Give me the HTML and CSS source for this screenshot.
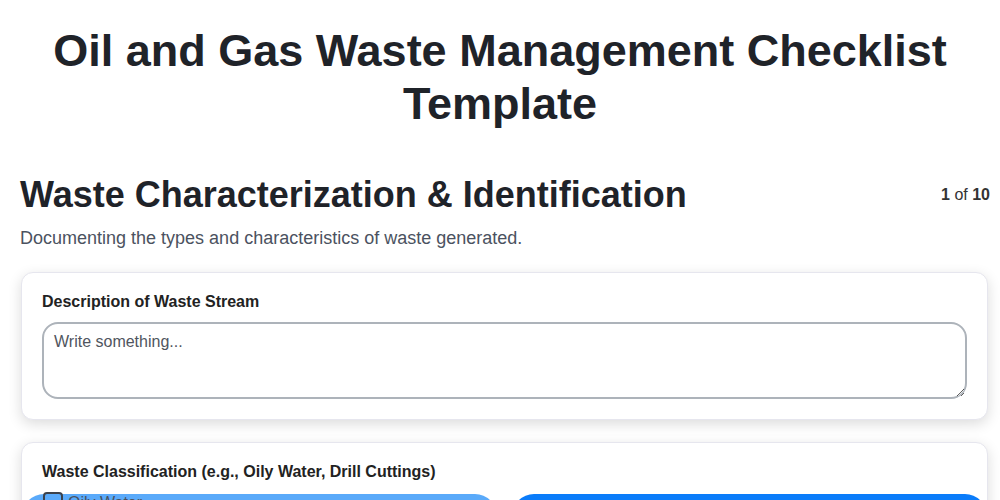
FILE: index.html
```html
<!DOCTYPE html>
<html lang="en">
<head>
    <meta charset="UTF-8">
    <meta name="viewport" content="width=device-width, initial-scale=1.0">
    <title>Oil and Gas Waste Management Checklist Template</title>
    <link rel="stylesheet" href="styles.css">
</head>
<body>
    <h1 class="page-title">Oil and Gas Waste Management Checklist Template</h1>

    <div class="section">
        <div class="section-header">
            <h2 class="section-title">Waste Characterization &amp; Identification</h2>
            <div class="step-count"><b>1</b> of <b>10</b></div>
        </div>
        <p class="section-desc">Documenting the types and characteristics of waste generated.</p>

        <div class="card">
            <label class="field-label" for="desc">Description of Waste Stream</label>
            <textarea id="desc" class="field-text" placeholder="Write something..."></textarea>
        </div>

        <div class="card">
            <div class="field-label">Waste Classification (e.g., Oily Water, Drill Cuttings)</div>
            <div class="options">
                <label class="option option-light"><input type="checkbox"> Oily Water</label>
                <label class="option option-dark"><input type="checkbox"> Drill Cuttings</label>
            </div>
        </div>
    </div>
</body>
</html>
```

FILE: styles.css
```css
body {
    margin: 0;
    font-family: "Liberation Sans", Arial, sans-serif;
    color: #212529;
    background-color: #fff;
}

.page-title {
    margin: 24px 40px 43px;
    font-size: 45px;
    line-height: 53px;
    text-align: center;
    color: #1f2329;
}

.section {
    padding: 0 10px 0 20px;
}

.section-header {
    display: flex;
    justify-content: space-between;
    align-items: flex-start;
}

.section-title {
    margin: 0;
    font-size: 36px;
    line-height: 44px;
    color: #1f2329;
}

.step-count {
    margin-top: 13px;
    font-size: 16px;
    color: #333;
}

.section-desc {
    margin: 11px 0 23px;
    font-size: 18px;
    color: #4b5260;
}

.card {
    margin: 0 2px 22px 1px;
    padding: 20px;
    background-color: #fff;
    border: 1px solid #e6e6ee;
    border-radius: 12px;
    box-shadow: 0 4px 14px rgba(0, 0, 0, 0.14);
}

.field-label {
    display: block;
    margin-bottom: 11px;
    font-size: 16px;
    font-weight: bold;
    color: #222;
}

.field-text {
    display: block;
    box-sizing: border-box;
    width: 100%;
    height: 77px;
    padding: 9px 10px;
    border: 2px solid #adb3ba;
    border-radius: 16px;
    font-family: inherit;
    font-size: 16px;
}

.field-text::placeholder {
    color: #50555e;
}

.options {
    display: grid;
    grid-template-columns: 1fr 1fr;
    gap: 15px;
    margin: 13px -20px 0;
}

.option {
    display: flex;
    align-items: flex-start;
    gap: 5px;
    height: 60px;
    padding: 0 20px 0 21px;
    border-radius: 22px;
    font-size: 16px;
    color: #4a5260;
}

.option input {
    appearance: none;
    width: 20px;
    height: 20px;
    margin: -2px 0 0 0;
    border: 2px solid #3c424b;
    border-radius: 4px;
    background: transparent;
}

.option-light {
    background-color: #5aaafa;
}

.option-dark {
    background-color: #0a7cfa;
    color: #fff;
    padding-top: 14px;
}
```
